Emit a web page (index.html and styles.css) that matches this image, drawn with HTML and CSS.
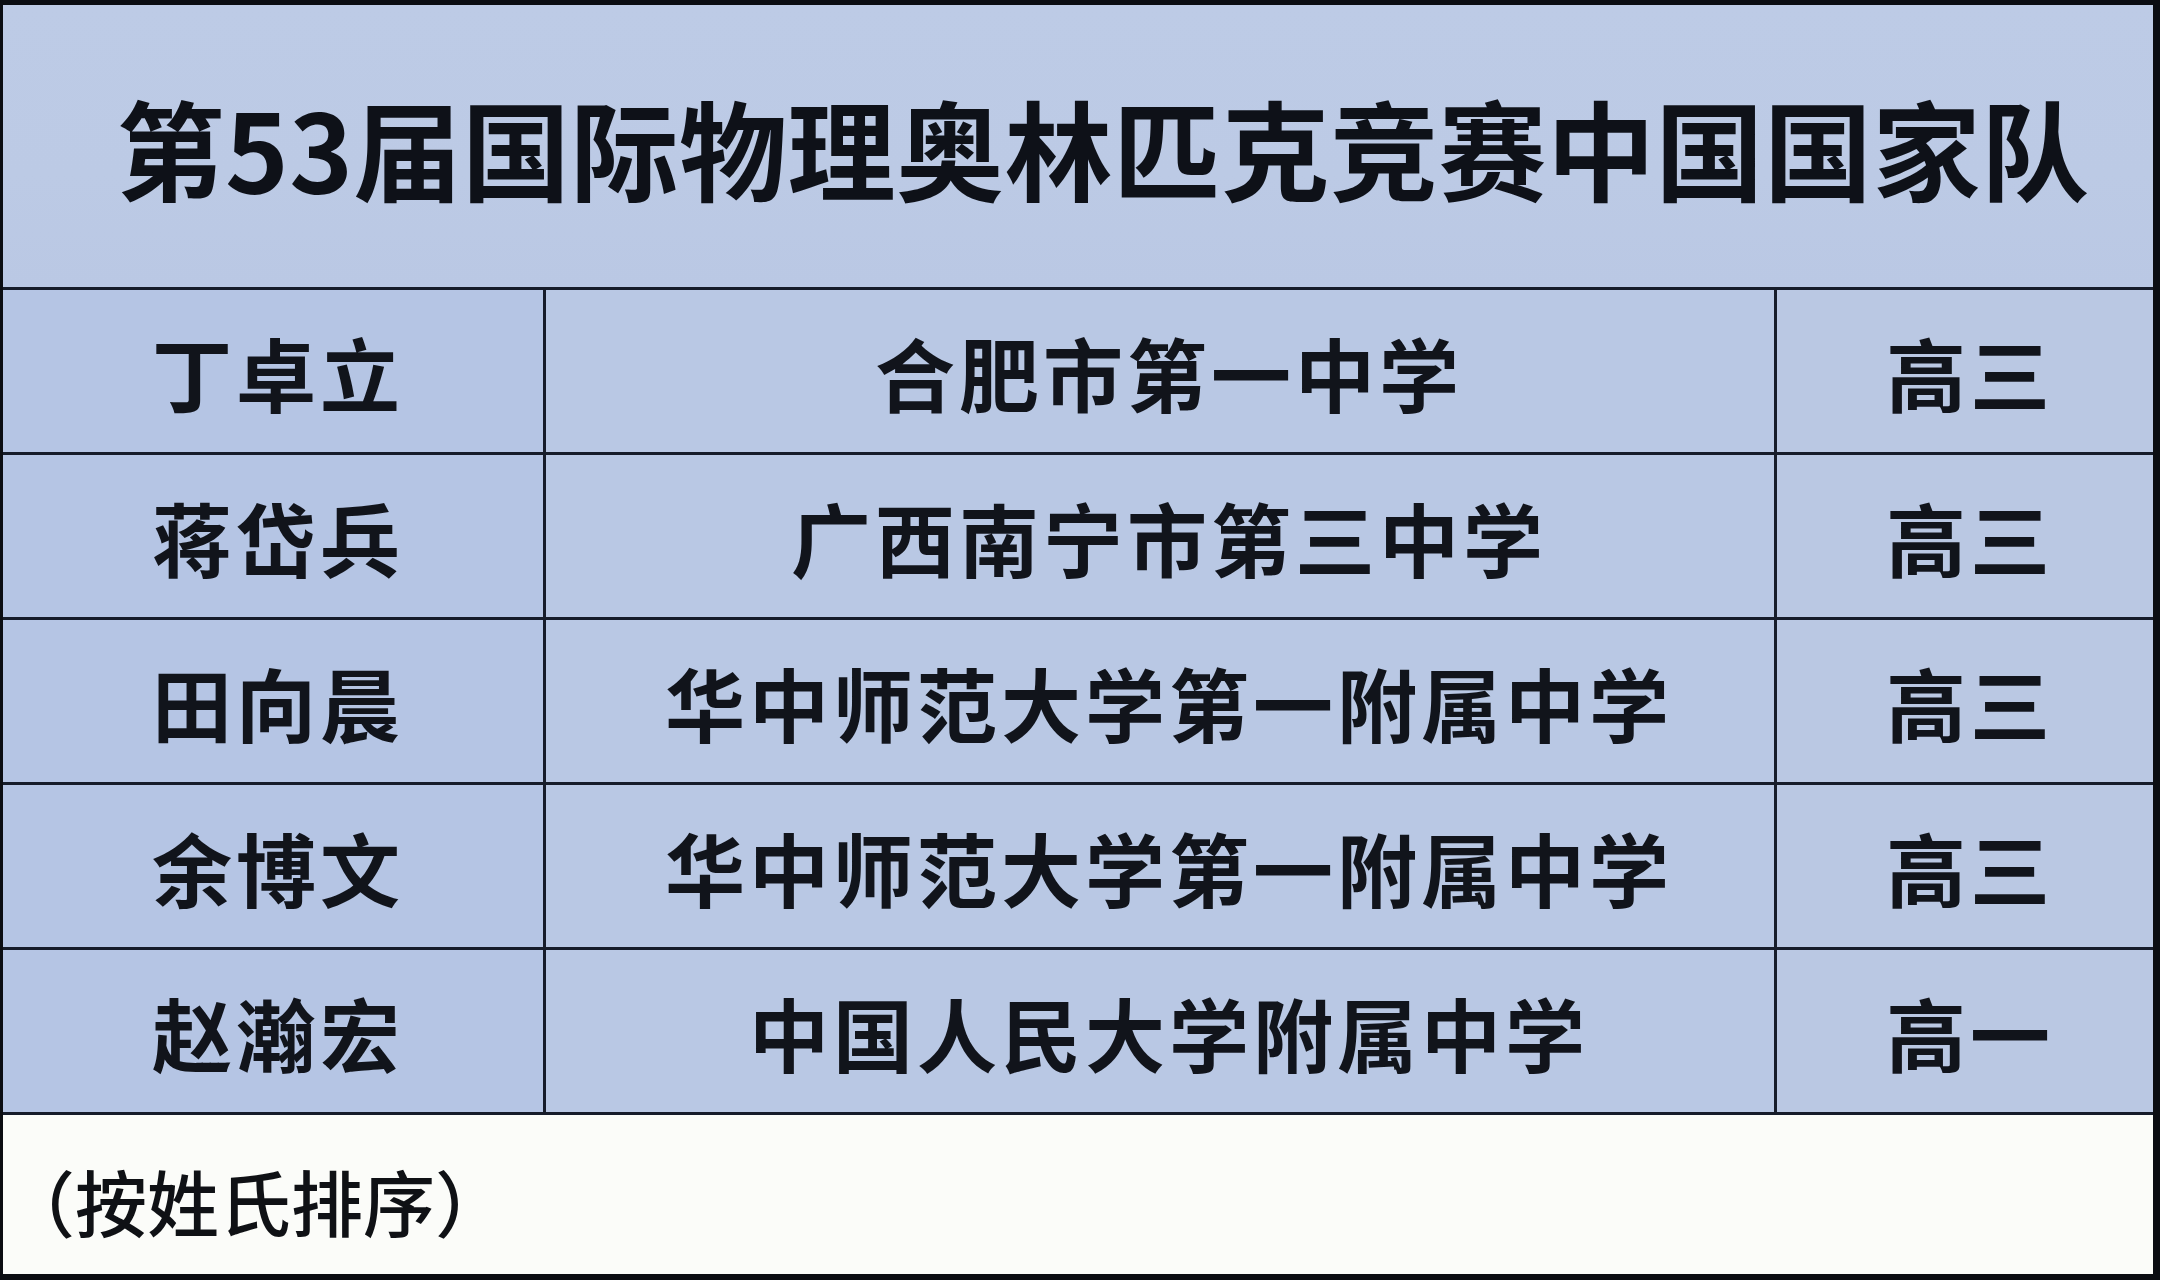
FILE: index.html
```html
<!DOCTYPE html>
<html lang="zh-CN">
<head>
<meta charset="utf-8">
<title>第53届国际物理奥林匹克竞赛中国国家队</title>
<link rel="stylesheet" href="styles.css">
</head>
<body>
<div class="frame">
  <header class="title-box">
    <h1 class="title">第53届国际物理奥林匹克竞赛中国国家队</h1>
  </header>
  <div class="table">
    <div class="cell name">丁卓立</div>
    <div class="cell school">合肥市第一中学</div>
    <div class="cell grade">高三</div>

    <div class="cell name">蒋岱兵</div>
    <div class="cell school">广西南宁市第三中学</div>
    <div class="cell grade">高三</div>

    <div class="cell name">田向晨</div>
    <div class="cell school">华中师范大学第一附属中学</div>
    <div class="cell grade">高三</div>

    <div class="cell name">余博文</div>
    <div class="cell school">华中师范大学第一附属中学</div>
    <div class="cell grade">高三</div>

    <div class="cell name">赵瀚宏</div>
    <div class="cell school">中国人民大学附属中学</div>
    <div class="cell grade">高一</div>
  </div>
  <footer class="note">
    <span class="note-text">（按姓氏排序）</span>
  </footer>
</div>
</body>
</html>
```

FILE: styles.css
```css
html, body {
  margin: 0;
  padding: 0;
  background: #0c0f14;
}

body {
  width: 2160px;
  height: 1280px;
  overflow: hidden;
  font-family: "Noto Sans CJK SC", "Noto Sans", sans-serif;
  color: #12151c;
}

.frame {
  box-sizing: border-box;
  width: 2160px;
  height: 1280px;
  border-style: solid;
  border-color: #0b0d12;
  border-width: 5px 7px 6px 3px;
  display: flex;
  flex-direction: column;
  background: #b9c7e3;
}

.title-box {
  height: 282px;
  flex: none;
  display: flex;
  align-items: center;
  justify-content: center;
  background: linear-gradient(180deg, #bdcbe6 0%, #bccae5 60%, #bac8e4 100%);
}

.title {
  margin: 0 0 0 50px;
  font-size: 108px;
  font-weight: 700;
  letter-spacing: 0.5px;
  line-height: 1;
  color: #0e1118;
}

.table {
  flex: none;
  display: grid;
  grid-template-columns: 540px 1228px 1fr;
  grid-auto-rows: 162px;
  gap: 3px;
  padding: 3px 0;
  background: #161c2a;
}

.cell {
  display: flex;
  align-items: center;
  justify-content: center;
  background: #b8c7e4;
  font-size: 80px;
  font-weight: 700;
  letter-spacing: 4px;
  line-height: 1;
  color: #11141b;
}

.cell.name {
  padding-left: 10px;
  background: #b5c5e4;
}

.cell.school {
  padding-left: 18px;
  background: #b9c8e4;
}

.cell.grade {
  padding-left: 10px;
  background: #bac8e3;
}

.note {
  flex: 1;
  display: flex;
  align-items: center;
  background: #fbfcf9;
  padding-left: 0;
}

.note-text {
  font-size: 72px;
  font-weight: 500;
  line-height: 1;
  color: #0f1115;
  margin-top: 10px;
}
```
